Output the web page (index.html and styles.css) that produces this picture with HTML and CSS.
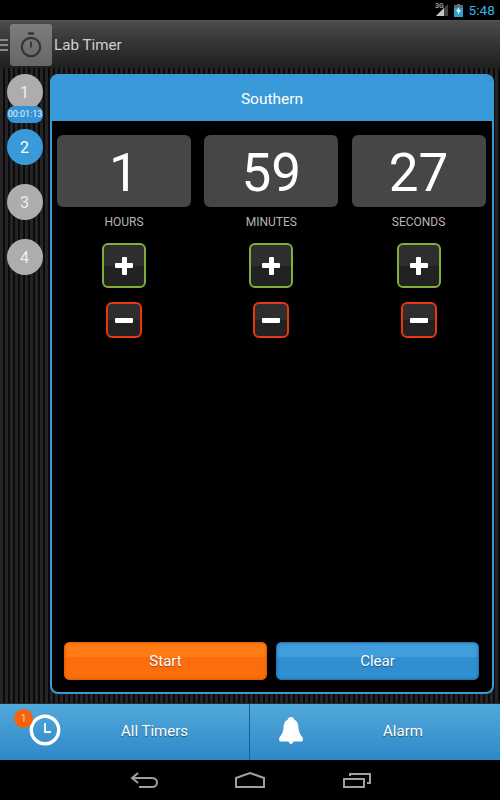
FILE: index.html
```html
<!DOCTYPE html>
<html>
<head>
  <title>Lab Timer</title>
  <meta charset="UTF-8">
  <meta name="viewport" content="width=device-width, initial-scale=1.0">
  <link rel="stylesheet" href="styles.css">
</head>
<body>
  <div class="status-bar">
    <span class="net">3G</span>
    <svg class="signal" width="12" height="12" viewBox="0 0 12 12"><path d="M0 12 L12 0 V12 Z" fill="#444"/><path d="M0 12 L8 4 V12 Z" fill="#c4c4c4"/></svg>
    <svg class="battery" width="9" height="13" viewBox="0 0 9 13"><path d="M3 0 H6 V1 H9 V13 H0 V1 H3 Z" fill="#2f9fcc"/><path d="M0 1 H9 V4 H0 Z" fill="#666"/><path d="M5.500 2.500 L2 7.500 H4.300 L3.500 11 L7 6 H4.700 Z" fill="#fff"/></svg>
    <span class="clock">5:48</span>
  </div>

  <div class="action-bar">
    <div class="menu-lines"><i></i><i></i><i></i></div>
    <div class="app-icon">
      <svg width="24" height="26" viewBox="0 0 24 26" fill="none" stroke="#333" stroke-width="2.200">
        <path d="M9 1.500 H15" stroke-width="2.500"/>
        <circle cx="12" cy="15" r="9.200"/>
        <path d="M12 9.500 V15.500" stroke-width="1.800"/>
      </svg>
    </div>
    <span class="app-title">Lab Timer</span>
  </div>

  <div class="main">
    <!-- timer list -->
    <div class="sidebar">
      <div class="dot-wrap">
        <div class="dot">1</div>
        <div class="pill">00:01:13</div>
      </div>
      <div class="dot-wrap"><div class="dot active">2</div></div>
      <div class="dot-wrap"><div class="dot">3</div></div>
      <div class="dot-wrap"><div class="dot">4</div></div>
    </div>

    <div class="panel">
      <div class="panel-header">Southern</div>
      <div class="panel-body">
        <div class="columns">
          <div class="col">
            <div class="digit">1</div>
            <div class="unit">HOURS</div>
            <button class="step plus" aria-label="plus"></button>
            <button class="step minus" aria-label="minus"></button>
          </div>
          <div class="col">
            <div class="digit">59</div>
            <div class="unit">MINUTES</div>
            <button class="step plus" aria-label="plus"></button>
            <button class="step minus" aria-label="minus"></button>
          </div>
          <div class="col">
            <div class="digit">27</div>
            <div class="unit">SECONDS</div>
            <button class="step plus" aria-label="plus"></button>
            <button class="step minus" aria-label="minus"></button>
          </div>
        </div>
        <div class="actions">
          <button class="action start">Start</button>
          <button class="action clear">Clear</button>
        </div>
      </div>
    </div>
  </div>

  <div class="tabs">
    <div class="tab tab-timers">
      <div class="tab-icon">
        <svg width="32" height="32" viewBox="0 0 32 32" fill="none" stroke="#fff">
          <circle cx="16" cy="16" r="13.700" stroke-width="3.400"/>
          <path d="M16 9 V18 H22" stroke-width="1.800"/>
        </svg>
        <span class="badge">1</span>
      </div>
      <span class="tab-label">All Timers</span>
    </div>
    <div class="tab tab-alarm">
      <div class="tab-icon">
        <svg width="24" height="27" viewBox="0 0 24 27"><path d="M12 0 C13.800 0 15 1 15.300 2.800 C18.500 4 19.300 7.500 19.500 11 C19.800 15.500 21.500 18 23.600 20.500 C24.300 22.500 23.800 24.500 22 24.500 H14.500 C14 26 13 27 12 27 C11 27 10 26 9.500 24.500 H2 C0.200 24.500 -0.300 22.500 0.400 20.500 C2.500 18 4.200 15.500 4.500 11 C4.700 7.500 5.500 4 8.700 2.800 C9 1 10.200 0 12 0 Z" fill="#fff"/></svg>
      </div>
      <span class="tab-label">Alarm</span>
    </div>
  </div>

  <div class="nav-bar">
    <svg class="nav-back" width="28" height="16" viewBox="0 0 28 16" fill="none" stroke="#a0a0a0" stroke-width="2"><path d="M8 1 L2 6 L8 11"/><path d="M2 6 H22 C25 6 27 8 27 10.500 C27 13 25 15 22 15 H9"/></svg>
    <svg class="nav-home" width="30" height="16" viewBox="0 0 30 16" fill="none" stroke="#a0a0a0" stroke-width="2"><path d="M1 6 L15 1 L29 6 V15 H1 Z"/></svg>
    <svg class="nav-recent" width="28" height="15" viewBox="0 0 28 15" fill="none" stroke="#a0a0a0" stroke-width="2"><path d="M1 6 H21 V14 H1 Z"/><path d="M7 3 V1 H27 V10 H24"/></svg>
  </div>
</body>
</html>
```

FILE: styles.css
```css
body {
  font-family: Roboto, sans-serif;
  background: #000;
  margin: 0;
  width: 500px;
  height: 800px;
  overflow: hidden;
  display: flex;
  flex-direction: column;
}

button {
  font-family: inherit;
  padding: 0;
  cursor: pointer;
}

/* status bar */
.status-bar {
  height: 20px;
  display: flex;
  align-items: center;
  justify-content: flex-end;
  padding-right: 5px;
  background: #000;
  position: relative;
}

.net {
  position: absolute;
  left: 435px;
  top: 2px;
  font-size: 7px;
  font-weight: 700;
  color: #999;
}

.signal {
  margin-right: 6px;
}

.battery {
  margin-right: 6px;
}

.clock {
  font-size: 13.500px;
  letter-spacing: 0.100px;
  color: #33b5e5;
}

/* action bar */
.action-bar {
  height: 48px;
  display: flex;
  align-items: center;
  background: linear-gradient(#4c4c4c, #3a3a3a 35%, #1f1f1f);
  border-top: 1px solid #555;
  box-sizing: border-box;
}

.menu-lines {
  width: 8px;
  margin-right: 2px;
  display: flex;
  flex-direction: column;
  gap: 3px;
}

.menu-lines i {
  display: block;
  height: 2px;
  background: #888;
}

.app-icon {
  width: 42px;
  height: 42px;
  border-radius: 3px;
  background: linear-gradient(#7d7d7d, #666);
  display: flex;
  align-items: center;
  justify-content: center;
}

.app-title {
  margin-left: 2px;
  font-size: 15.200px;
  color: #d0d0d0;
}

/* striped area */
.main {
  height: 635px;
  display: flex;
  padding-top: 6px;
  box-sizing: border-box;
  background: repeating-linear-gradient(90deg, #242427 0, #242427 3px, #0b0b0b 3px, #0b0b0b 5px);
}

.sidebar {
  width: 50px;
  padding-left: 7px;
  box-sizing: border-box;
  display: flex;
  flex-direction: column;
  gap: 19px;
}

.dot-wrap {
  position: relative;
  width: 36px;
  height: 36px;
}

.dot {
  width: 36px;
  height: 36px;
  border-radius: 50%;
  background: #aeacae;
  color: #eee;
  font-size: 16px;
  padding-right: 1px;
  box-sizing: border-box;
  display: flex;
  align-items: center;
  justify-content: center;
}

.dot.active {
  background: #3a9ad9;
  color: #fff;
}

.pill {
  position: absolute;
  left: 0;
  top: 32px;
  width: 36px;
  height: 17px;
  line-height: 17px;
  border-radius: 8px;
  background: #3393d4;
  color: #e8f2f8;
  font-size: 9px;
  text-align: center;
}

.panel {
  width: 444px;
  height: 620px;
  box-sizing: border-box;
  border: 2px solid #3a9ad9;
  border-radius: 8px;
  background: #000;
  display: flex;
  flex-direction: column;
}

.panel-header {
  height: 45px;
  line-height: 47px;
  background: #3a9ad9;
  border-radius: 5px 5px 0 0;
  color: #fff;
  font-size: 15.500px;
  text-align: center;
}

.panel-body {
  flex: 1;
  display: flex;
  flex-direction: column;
  justify-content: space-between;
  padding: 14px 0 12px;
}

.columns {
  display: grid;
  grid-template-columns: 134px 134px 134px;
  column-gap: 13.300px;
  padding-left: 5px;
}

.col {
  display: flex;
  flex-direction: column;
  align-items: center;
}

.digit {
  width: 100%;
  height: 72px;
  line-height: 76px;
  background: #454745;
  border-radius: 6px;
  color: #fff;
  font-size: 53px;
  text-align: center;
}

.unit {
  margin-top: 8px;
  height: 14px;
  line-height: 14px;
  font-size: 12px;
  color: #b5b5b5;
}

.step {
  position: relative;
  box-sizing: border-box;
  background: linear-gradient(#2e2e2e, #2e2e2e 50%, #222 50%, #222);
  border-radius: 6px;
}

.plus {
  width: 44px;
  height: 45px;
  margin-top: 14px;
  border: 2px solid #83ad3c;
}

.minus {
  width: 36px;
  height: 36px;
  margin-top: 14px;
  border: 2px solid #e8360f;
}

/* plus and minus bars */
.step::before,
.plus::after {
  content: "";
  position: absolute;
  left: 50%;
  top: 50%;
  width: 18px;
  height: 5px;
  margin: -2.500px 0 0 -9px;
  border-radius: 1px;
  background: #fff;
}

.plus::after {
  width: 5px;
  height: 18px;
  margin: -9px 0 0 -2.500px;
}

.actions {
  display: flex;
  gap: 9px;
  padding-left: 12px;
}

.action {
  width: 203px;
  height: 38px;
  border-radius: 5px;
  color: #fff;
  font-size: 15px;
  text-shadow: 0 1px 1px rgba(0, 0, 0, 0.4);
}

.start {
  background: linear-gradient(#ff7d14, #ff7d14 40%, #fb6e0b 40%, #fb6e0b);
  border: 1px solid #e8600a;
  box-shadow: inset 0 0 3px #e35c06;
}

.clear {
  background: linear-gradient(#429ddb, #429ddb 40%, #2f8fd0 40%, #2f8fd0);
  border: 1px solid #2277b5;
  box-shadow: inset 0 0 3px #1f73b0;
}

/* bottom tabs */
.tabs {
  height: 57px;
  display: flex;
  background: linear-gradient(#52a9dc, #2f88c7);
  border-top: 1px solid #2a2a2a;
  box-sizing: border-box;
}

.tab {
  position: relative;
  display: flex;
  align-items: center;
  justify-content: center;
  padding-bottom: 2px;
  color: #fff;
  font-size: 15px;
  text-shadow: 0 1px 1px rgba(0, 0, 0, 0.45);
}

.tab-timers {
  width: 250px;
  box-sizing: border-box;
  padding-left: 60px;
  border-right: 1px solid #1f5f8c;
}

.tab-alarm {
  width: 250px;
  padding-left: 56px;
  box-sizing: border-box;
}

.tab-icon {
  position: absolute;
  display: flex;
}

.tab-timers .tab-icon {
  left: 29px;
  top: 10px;
}

.tab-alarm .tab-icon {
  left: 29px;
  top: 13px;
}

.badge {
  position: absolute;
  left: -15px;
  top: -5px;
  width: 19px;
  height: 19px;
  line-height: 19px;
  border-radius: 50%;
  background: #f9600c;
  color: #f7c8a8;
  font-size: 11px;
  text-align: center;
  text-shadow: none;
}

/* nav bar */
.nav-bar {
  height: 40px;
  background: #000;
  display: flex;
  align-items: center;
  padding-left: 130px;
}

.nav-back {
  margin-right: 77px;
}

.nav-home {
  margin-right: 78px;
}
```
